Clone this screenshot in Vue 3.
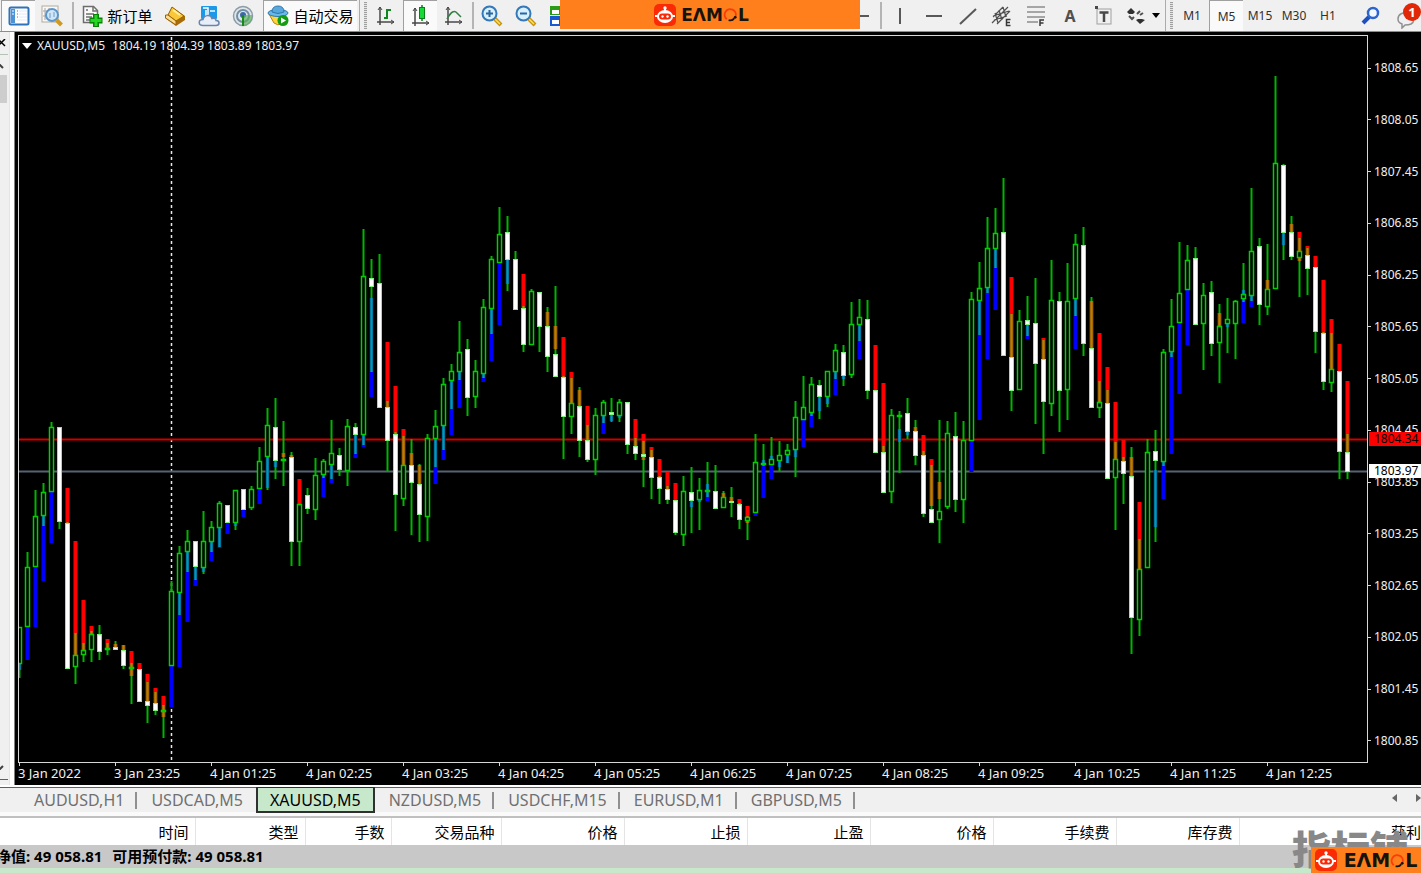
<script setup>
// One bar per entry: kind (g rising, w falling), high, body top, body bottom, low,
// then optionally the trend ribbon: colour (b, r), top, bottom. Plot units.
const source = `
g 627 627 664 678 b 664 670;g 552 567 627 627 b 627 660;g 490 516 567 567 b 567 627;g 483 492 516 526 b 516 581;
g 422 427 492 492 b 492 543;w 427 427 522 529;w 522 523 669 669 r 488 523;g 633 655 667 684 r 541 655;
g 643 650 655 662 r 600 650;g 631 634 650 662 r 626 634;w 625 634 652 660;g 643 648 649 655 r 639 649;
w 641 647 650 650 r 644 647;w 645 650 666 669 r 645 650;g 663 667 668 704 r 651 676;w 669 669 702 702 r 663 669;
w 682 701 706 723 r 674 701;w 692 703 711 715 r 688 703;g 705 710 711 738 r 696 717;g 581 591 666 666 b 666 707;
g 546 553 593 615 b 593 667;g 530 541 552 572 b 552 622;w 541 541 567 580 b 567 586;g 511 541 568 574 b 568 572;
g 521 527 542 552 b 542 561;g 501 503 528 547 b 528 548;w 505 505 523 523 b 523 534;g 490 490 523 530 b 523 526;
w 489 489 510 510 b 510 517;g 486 489 508 510;g 447 461 489 489 b 489 504;g 408 425 457 490 b 457 488;
w 398 427 461 479 b 461 467;g 421 459 460 486 r 453 457;w 452 457 542 566 r 455 457;g 504 504 542 566 r 479 504;
w 488 495 509 514;g 458 475 510 520;g 459 461 475 478 b 475 497;g 420 453 465 479 b 465 483;
w 448 455 470 476;g 419 426 471 486;w 423 427 435 454 b 435 458;g 229 276 435 445 b 435 447;
w 259 278 287 372 b 298 397;w 254 283 408 408;w 401 407 441 471 r 342 407;w 432 434 495 531 r 386 434;
g 436 465 499 506 r 429 465;w 439 465 483 535 r 453 465;w 464 484 515 542 r 465 484;g 434 438 517 541;
g 410 426 439 467 b 439 484;g 378 384 426 450 b 426 460;g 364 371 381 409 b 381 435;g 321 352 372 380 b 372 408;
w 339 349 398 416;g 360 371 397 408;g 299 307 374 378 b 374 382;g 256 259 309 334 b 309 361;
g 207 234 263 263 b 263 325;w 216 232 260 291 b 260 284;w 251 259 310 310;w 306 308 345 352 r 274 308;
g 289 291 345 345;w 292 292 327 352;w 307 326 357 372 r 312 326;w 286 354 377 377 r 326 349;
w 376 377 417 459 r 337 377;g 378 403 417 434 r 372 403;w 387 406 441 457 r 390 406;w 425 440 460 462 r 406 440;
g 408 415 460 475;g 400 402 416 423 b 416 434;w 398 412 415 422 b 415 421;g 399 402 416 422 b 416 418;
w 402 402 445 454;w 438 446 454 460 r 419 446;w 441 454 457 487 r 434 460;w 450 457 478 499 r 447 457;
w 476 477 489 504 r 459 477;w 486 489 500 504 r 472 489;w 500 500 533 535 r 483 500;g 476 491 535 546;
w 467 492 501 533 b 501 507;g 478 490 500 530 b 500 502;g 462 490 491 497 b 484 501;w 465 491 509 509;
g 491 497 508 508 r 493 497;w 487 501 503 517 r 497 501;w 503 504 520 529 r 499 504;g 516 517 521 540 r 506 523;
g 434 462 513 513 b 513 516;g 444 463 465 466 b 460 498;g 437 459 465 465 b 456 479;g 441 455 461 471 b 461 467;
g 444 450 455 463 b 455 463;g 401 417 450 477 b 450 457;g 376 407 420 420 b 420 447;g 377 384 413 416 b 413 427;
w 380 385 397 419 b 397 411;g 371 371 397 407 b 397 404;g 344 350 372 379 b 372 395;w 345 352 376 386 b 376 379;
g 302 324 375 378;g 299 317 325 341 b 325 359;w 300 319 391 399;w 390 390 453 453 r 345 390;
w 446 452 493 493 r 383 452;g 409 415 492 503;g 411 415 416 473 b 429 442;w 398 413 432 439 b 432 435;
w 420 431 456 465 r 427 431;w 451 455 514 517 r 435 455;w 465 509 523 523 r 459 506;g 420 511 520 543 r 482 499;
g 421 433 507 509;w 412 436 500 512;g 421 440 500 523;g 292 299 441 441 b 441 472;
g 262 288 301 335 b 301 420;g 217 248 288 293 b 288 359;g 208 233 249 268 b 249 310;w 178 232 356 356;
w 314 357 391 411 r 277 357;g 310 321 390 390;w 296 320 325 336 b 325 339;w 278 323 364 424;
w 340 359 402 454 r 338 359;g 260 300 404 416;w 292 301 391 432;g 263 301 390 420;
g 234 244 299 316 b 299 349;w 227 245 344 356;w 297 348 408 408 r 301 348;g 381 402 408 418 r 333 402;
w 390 403 479 479 r 367 403;g 442 459 478 530 r 402 459;w 457 461 474 504 r 440 461;w 447 476 618 654 r 457 476;
g 539 569 620 636 r 502 569;g 439 452 568 568;w 430 451 461 542 b 470 527;g 349 352 462 466 b 462 499;
g 299 326 352 357 b 352 454;g 242 293 323 323 b 323 394;g 245 260 290 290 b 290 345;w 247 258 325 325;
g 283 295 324 370;w 281 292 344 356;g 304 326 343 383 r 313 326;g 298 319 324 353 b 324 327;
g 300 301 324 359;g 263 294 299 302 b 290 323;g 188 251 296 301 b 296 307;w 238 246 305 325;
g 244 289 307 315 r 280 289;g 76 163 289 289;w 164 165 233 260 b 233 245;w 216 232 257 260 r 224 232;
g 238 251 258 297 r 232 261;w 248 255 269 295 r 246 255;w 267 267 332 353 r 256 267;w 332 333 382 390 r 280 333;
g 333 369 383 392 r 319 369;w 371 371 452 479 r 344 371;w 434 452 472 479 r 381 452`

const candles = source.trim().split(';').map((entry, i) => {
  const [kind, high, top, bottom, low, tone, from, to] = entry.trim().split(' ')
    .map((v) => (/^\d/.test(v) ? Number(v) : v))
  const start = Math.max(high, from)
  const end = Math.min(low, to)
  return { kind, high, top, bottom, low, tone, from, to, start, end, x: 19.5 + i * 8, overlap: tone && end > start }
})

const prices = ['1808.65', '1808.05', '1807.45', '1806.85', '1806.25', '1805.65', '1805.05', '1804.45', '1803.85', '1803.25', '1802.65', '1802.05', '1801.45', '1800.85']
const times = ['3 Jan 2022', '3 Jan 23:25', '4 Jan 01:25', '4 Jan 02:25', '4 Jan 03:25', '4 Jan 04:25', '4 Jan 05:25', '4 Jan 06:25', '4 Jan 07:25', '4 Jan 08:25', '4 Jan 09:25', '4 Jan 10:25', '4 Jan 11:25', '4 Jan 12:25']
const tabs = ['AUDUSD,H1', 'USDCAD,M5', 'XAUUSD,M5', 'NZDUSD,M5', 'USDCHF,M15', 'EURUSD,M1', 'GBPUSD,M5']
const columns = ['时间', '类型', '手数', '交易品种', '价格', '止损', '止盈', '价格', '手续费', '库存费', '获利']
const frames = ['M1', 'M5', 'M15', 'M30', 'H1']
</script>

<template>
  <div class="app">
    <header class="toolbar">
      <button class="tool pressed" aria-label="Market watch">
        <svg width="22" height="20" viewBox="0 0 22 20"><rect x="1.5" y="1.5" width="19" height="17" rx="1.5" fill="#fff" stroke="#2f74b8" stroke-width="2"/><rect x="3" y="3" width="4" height="14" fill="#4e94d4"/><path d="M4 5h2M4 8h2" stroke="#fff"/><path d="M9 5h1M9 8h1M9 11h1" stroke="#e04040"/><path d="M11 5h8M11 8h8M11 11h8M9 14h10" stroke="#e4ecf8"/></svg>
      </button>
      <button class="tool" aria-label="Data window">
        <svg width="24" height="22" viewBox="0 0 24 22"><rect x="2" y="1" width="16" height="16" fill="#f8f8f8" stroke="#b4aa9a"/><path d="M5 3v12M9 3v12M3 6h14M3 11h14" stroke="#a8a8a8"/><circle cx="12" cy="10" r="6" fill="#cfe6f8" stroke="#5c96c8" stroke-width="2"/><path d="M10 13V8M14 12V7" stroke="#6c9cc4"/><path d="M16.500 15l5 5" stroke="#d09a20" stroke-width="4"/></svg>
      </button>
      <i class="divider"></i>
      <button class="tool wide">
        <svg width="22" height="24" viewBox="0 0 22 24"><path d="M1.500 2.500h10l4 4v12h-14z" fill="#fafafa" stroke="#6c6c6c" stroke-width="1.500"/><path d="M11 2v5h5M4 6h2M4 10h8M4 13h6M4 16h4" stroke="#707070" fill="none" stroke-width="1.500"/><path d="M14 10v13M7.500 16.500h13" stroke="#078207" stroke-width="6"/><path d="M14 11v11M8.500 16.500h11" stroke="#22d822" stroke-width="3"/></svg>
        <span>新订单</span>
      </button>
      <button class="tool" aria-label="Metaeditor">
        <svg width="22" height="20" viewBox="0 0 22 20"><path d="M8 1l13 9v4l-9 6L1 12V9h3z" fill="#a86c04"/><path d="M8 1l12 9-8 5-8-6z" fill="#f8c838" stroke="#9c6000"/><path d="M1.500 9H4l8 6v4L1.500 12z" fill="#f8dc90" stroke="#9c6000"/><path d="M9 4l7 5" stroke="#fff0a0" stroke-width="2"/></svg>
      </button>
      <button class="tool" aria-label="Cloud service">
        <svg width="22" height="22" viewBox="0 0 22 22"><rect x="3" y="1" width="16" height="13" rx="1" fill="#1c98e8"/><path d="M5 3h5v9M8 5v7" stroke="#fff" stroke-width="1.500" fill="none"/><path d="M12 6h5" stroke="#b8e4ff" stroke-width="2"/><path d="M5 20.500c-5 0-5-6 0-6 1-5 8-5 9-1 3-1 4 1 4 2 4 0 4 5 0 5z" fill="#e8eef8" stroke="#6c84ac" stroke-width="1.500"/></svg>
      </button>
      <button class="tool" aria-label="Signals">
        <svg width="22" height="22" viewBox="0 0 22 22"><circle cx="11" cy="11" r="9.500" fill="#e0e6ea" stroke="#8c9ca8" stroke-width="1.500"/><circle cx="11" cy="11" r="6" fill="none" stroke="#7090a4" stroke-width="2"/><circle cx="11" cy="10" r="3" fill="#3c68a8"/><path d="M11 10v11c6-1 10-5 9-11" fill="#58b058" opacity=".65"/><path d="M11 10v11" stroke="#188818" stroke-width="2"/></svg>
      </button>
      <button class="tool auto pressed">
        <svg width="22" height="22" viewBox="0 0 22 22"><path d="M2 9l5 9q4 3 7 1l5-9z" fill="#ffd43c" stroke="#b88408"/><ellipse cx="11" cy="8" rx="10" ry="3.500" fill="#68b8e8" stroke="#2c78b0"/><path d="M5 7q0-6 6-6t6 6q-6 3-12 0z" fill="#58a8dc" stroke="#2c78b0"/><circle cx="16" cy="15.500" r="5.500" fill="#129c12"/><path d="M14 12.500l5 3-5 3z" fill="#fff"/></svg>
        <span>自动交易</span>
      </button>
      <i class="edge"></i><i class="grip"></i>
      <button class="tool" aria-label="Bar chart">
        <svg width="20" height="20" viewBox="0 0 20 20"><path d="M4 1v18M1 16h17" stroke="#484848" stroke-width="1.500"/><path d="M2 4l2-3 2 3M15 14l3 2-3 2" stroke="#484848" fill="none"/><path d="M11 13V3M8 12h3M11 4h4" stroke="#108820" stroke-width="2"/></svg>
      </button>
      <button class="tool pressed" aria-label="Candlesticks">
        <svg width="20" height="22" viewBox="0 0 20 22"><path d="M4 3v18M1 18h17" stroke="#484848" stroke-width="1.500"/><path d="M2 6l2-3 2 3M15 16l3 2-3 2" stroke="#484848" fill="none"/><path d="M11 0v16" stroke="#088018" stroke-width="1.500"/><rect x="8.500" y="2.500" width="5" height="11" fill="#18d838" stroke="#088018"/></svg>
      </button>
      <button class="tool" aria-label="Line chart">
        <svg width="20" height="20" viewBox="0 0 20 20"><path d="M4 1v18M1 16h17" stroke="#484848" stroke-width="1.500"/><path d="M2 4l2-3 2 3M15 14l3 2-3 2" stroke="#484848" fill="none"/><path d="M3 13Q9 2 13 7l4 4" stroke="#348044" stroke-width="1.500" fill="none"/></svg>
      </button>
      <i class="rule"></i>
      <button class="tool" aria-label="Zoom in">
        <svg width="22" height="22" viewBox="0 0 22 22"><path d="M14 14l6 6" stroke="#c89410" stroke-width="4"/><path d="M14 14l5 5" stroke="#ffe060" stroke-width="1.500"/><circle cx="8.500" cy="8.500" r="7" fill="#d8efff" stroke="#3478b8" stroke-width="2"/><path d="M5 8.500h7M8.500 5v7" stroke="#2868a0" stroke-width="2"/></svg>
      </button>
      <button class="tool" aria-label="Zoom out">
        <svg width="22" height="22" viewBox="0 0 22 22"><path d="M14 14l6 6" stroke="#c89410" stroke-width="4"/><path d="M14 14l5 5" stroke="#ffe060" stroke-width="1.500"/><circle cx="8.500" cy="8.500" r="7" fill="#d8efff" stroke="#3478b8" stroke-width="2"/><path d="M5 8.500h7" stroke="#2868a0" stroke-width="2"/></svg>
      </button>
      <button class="tool" aria-label="Tile windows">
        <svg width="22" height="22" viewBox="0 0 22 22"><rect x="1" y="1" width="20" height="9" fill="#2c9c18"/><rect x="3" y="5" width="7" height="4" fill="#fff"/><rect x="1" y="11" width="20" height="10" fill="#1858d0"/><rect x="3" y="15" width="7" height="4" fill="#fff"/></svg>
      </button>
      <span class="fill"></span>
      <button class="tool" aria-label="Crosshair">
        <svg width="20" height="20" viewBox="0 0 20 20"><path d="M0 10h17M5 1v18" stroke="#585858" stroke-width="2"/></svg>
      </button>
      <i class="rule"></i>
      <button class="tool" aria-label="Vertical line">
        <svg width="20" height="20" viewBox="0 0 20 20"><path d="M10 2v16" stroke="#585858" stroke-width="2"/></svg>
      </button>
      <button class="tool" aria-label="Horizontal line">
        <svg width="20" height="20" viewBox="0 0 20 20"><path d="M2 10h16" stroke="#585858" stroke-width="2"/></svg>
      </button>
      <button class="tool" aria-label="Trend line">
        <svg width="20" height="20" viewBox="0 0 20 20"><path d="M2 18L18 3" stroke="#585858" stroke-width="2"/></svg>
      </button>
      <button class="tool" aria-label="Equidistant channel">
        <svg width="22" height="22" viewBox="0 0 22 22"><path d="M2 12L12 2M1 18L17 2M6 19L19 6M4 8l3 10M8 5l3 10M12 2l3 10M2 11l16-5M3 15l13-4" stroke="#505050" stroke-width="1.200"/><path d="M19.500 14.500h-4v6h4M15.500 17.500h3.500" stroke="#383838" stroke-width="1.500" fill="none"/></svg>
      </button>
      <button class="tool" aria-label="Fibonacci retracement">
        <svg width="20" height="22" viewBox="0 0 20 22"><path d="M1 2h18M1 7h18M1 12h18M1 17h11" stroke="#8c8c8c" stroke-width="1.500"/><path d="M18 15h-4v6M14 18h3.500" stroke="#383838" stroke-width="1.500" fill="none"/></svg>
      </button>
      <button class="tool letter" aria-label="Text">A</button>
      <button class="tool" aria-label="Text label">
        <svg width="20" height="20" viewBox="0 0 20 20"><rect x="3" y="3" width="14" height="15" fill="none" stroke="#a0a0a0"/><path d="M5.500 6.500h9M10 6v10" stroke="#484848" stroke-width="2.500"/><path d="M1 0h3v3H1z" fill="#484848"/></svg>
      </button>
      <button class="tool objects" aria-label="Arrows">
        <svg width="20" height="18" viewBox="0 0 20 18"><path d="M5 1l4 4-2 2H3L1 5zM14 17l-4-4 2-1h4l3 1z" fill="#303030"/><path d="M3 9l3 3 2-2M11 7l3-3M14 8l3-2" stroke="#505050" stroke-width="2" fill="none"/></svg>
        <svg width="8" height="5" viewBox="0 0 8 5"><path d="M0 0h8L4 5z" fill="#000"/></svg>
      </button>
      <i class="edge"></i><i class="grip"></i>
      <button v-for="f in frames" :key="f" class="tool frame" :class="{ pressed: f === 'M5' }">{{ f }}</button>
      <button class="tool find" aria-label="Search">
        <svg width="20" height="20" viewBox="0 0 20 20"><path d="M8 11l-6 6" stroke="#1c50c0" stroke-width="4"/><circle cx="12" cy="7" r="5" fill="#f4f8ff" stroke="#2c64d0" stroke-width="2.500"/></svg>
      </button>
      <button class="tool chat" aria-label="Notifications">
        <svg width="24" height="26" viewBox="0 0 24 26"><path d="M2 16c0-5 5-7 10-6s8 8 3 11c-2 1-5 1-6 1l-3 3v-4c-3-1-4-3-4-5z" fill="#eef0f4" stroke="#909090" stroke-width="1.500"/></svg>
        <b>1</b>
      </button>
      <div class="banner">
        <svg class="robot" viewBox="0 0 22 22"><rect width="22" height="22" rx="5" fill="#fb2a06"/><circle cx="11" cy="4" r="1.700" fill="#fff"/><path d="M11 4v4M1 12h3M18 12h3" stroke="#fff" stroke-width="2"/><ellipse cx="11" cy="12.500" rx="8" ry="6.500" fill="#fff"/><rect x="5" y="9.500" width="12" height="6" rx="3" fill="#fb2a06"/><circle cx="8.500" cy="12.500" r="1.200" fill="#fff"/><circle cx="13.500" cy="12.500" r="1.200" fill="#fff"/></svg>
        <span>EΛM</span>
        <svg class="ring" viewBox="0 0 16 16"><path d="M4 13A6 6 0 1 1 13.500 10" fill="none" stroke="#fb3c08" stroke-width="2"/><path d="M6 14Q10 15 12 12" fill="none" stroke="#16120c" stroke-width="2"/><circle cx="13" cy="11" r="1.500" fill="#16120c"/></svg>
        <span>L</span>
      </div>
    </header>

    <main class="work">
      <aside class="side">
        <button class="close" aria-label="Close panel"><svg width="6" height="8" viewBox="0 0 6 8"><path d="M-2 0l7 7M5 0l-7 7" stroke="#000" stroke-width="1.500"/></svg></button>
        <div class="track">
          <svg width="4" height="5" viewBox="0 0 4 5"><path d="M-3 4l3-3 3 3" stroke="#404040" stroke-width="2" fill="none"/></svg>
          <i class="thumb"></i>
          <svg class="down" width="4" height="5" viewBox="0 0 4 5"><path d="M-3 1l3 3 3-3" stroke="#404040" stroke-width="2" fill="none"/></svg>
        </div>
      </aside>

      <section class="chart">
        <div class="plot">
          <svg class="canvas" viewBox="19 36 1348 726" preserveAspectRatio="none">
            <path d="M171.500 37V762" stroke="#e8e8e8" stroke-width="1.500" stroke-dasharray="3 3"/>
            <path d="M19 439.500H1367" stroke="#d00000" stroke-width="2"/>
            <path d="M19 471.500H1367" stroke="#566472" stroke-width="2"/>
            <g v-for="c in candles" :key="c.x">
              <rect v-if="c.tone" :class="c.tone" :x="c.x - 2" :y="c.from" width="4" :height="c.to - c.from"/>
              <line class="wick" :x1="c.x" :x2="c.x" :y1="c.high" :y2="c.low"/>
              <line v-if="c.overlap" :class="'mix-' + c.tone" :x1="c.x" :x2="c.x" :y1="c.start" :y2="c.end"/>
              <rect :class="c.kind" :x="c.x - 2" :y="c.top + 0.5" width="4" :height="Math.max(1, c.bottom - c.top - 1)"/>
            </g>
          </svg>
          <div class="caption">
            <svg width="10" height="6" viewBox="0 0 10 6"><path d="M0 0h10L5 6z" fill="#fff"/></svg>
            <span>XAUUSD,M5</span><span>1804.19 1804.39 1803.89 1803.97</span>
          </div>
        </div>
        <div class="prices">
          <span v-for="p in prices" :key="p">{{ p }}</span>
          <b class="tag ask">1804.34</b>
          <b class="tag bid">1803.97</b>
        </div>
        <div class="times"><span v-for="t in times" :key="t">{{ t }}</span></div>
      </section>
    </main>

    <nav class="tabs">
      <button v-for="t in tabs" :key="t" :class="{ active: t === 'XAUUSD,M5' }">{{ t }}</button>
      <span class="fill"></span>
      <button class="arrow" aria-label="Previous"><svg width="5" height="8" viewBox="0 0 5 8"><path d="M5 0v8L0 4z" fill="#666"/></svg></button>
      <button class="arrow" aria-label="Next"><svg width="5" height="8" viewBox="0 0 5 8"><path d="M0 0v8l5-4z" fill="#666"/></svg></button>
    </nav>

    <footer class="terminal">
      <span class="mark">指标铺</span>
      <table>
        <thead><tr><th v-for="(c, i) in columns" :key="i" :class="'c' + i">{{ c }}</th></tr></thead>
      </table>
      <div class="status"><span>净值: 49 058.81</span><span>可用预付款: 49 058.81</span></div>
      <div class="banner corner">
        <svg class="robot" viewBox="0 0 22 22"><rect width="22" height="22" rx="5" fill="#fb2a06"/><circle cx="11" cy="4" r="1.700" fill="#fff"/><path d="M11 4v4M1 12h3M18 12h3" stroke="#fff" stroke-width="2"/><ellipse cx="11" cy="12.500" rx="8" ry="6.500" fill="#fff"/><rect x="5" y="9.500" width="12" height="6" rx="3" fill="#fb2a06"/><circle cx="8.500" cy="12.500" r="1.200" fill="#fff"/><circle cx="13.500" cy="12.500" r="1.200" fill="#fff"/></svg>
        <span>EΛM</span>
        <svg class="ring" viewBox="0 0 16 16"><path d="M4 13A6 6 0 1 1 13.500 10" fill="none" stroke="#fb3c08" stroke-width="2"/><path d="M6 14Q10 15 12 12" fill="none" stroke="#16120c" stroke-width="2"/><circle cx="13" cy="11" r="1.500" fill="#16120c"/></svg>
        <span>L</span>
      </div>
    </footer>
  </div>
</template>

<style>
body { background: #f0f0f0; }
</style>

<style scoped>
.app {
  min-height: 100vh;
  display: flex;
  flex-direction: column;
  overflow: hidden;
  background: #f0f0f0;
  color: #000;
  font-family: "Noto Sans", "Noto Sans CJK SC", sans-serif;
  font-size: 15px;
}
.app * { box-sizing: border-box; }
button { border: 0; padding: 0; margin: 0; background: none; font: inherit; color: inherit; }
svg { display: block; flex: none; }
.fill { flex: 1; }

.toolbar {
  position: relative;
  display: flex;
  align-items: stretch;
  height: 32px;
  padding-left: 1px;
  border-bottom: 1px solid #8c8c8c;
}
.tool { flex: none; width: 34px; display: flex; align-items: center; justify-content: center; }
.tool span { line-height: 20px; white-space: nowrap; }
.pressed { background: #fafafa; border-top: 1px solid #a0a0a0; border-left: 1px solid #a0a0a0; }
.wide { width: 81px; gap: 3px; }
.auto { width: 94px; gap: 4px; margin: 0 2px 0 3px; }
.divider { flex: none; width: 2px; margin: 2px 3px; background: #b4b4b4; }
.rule { flex: none; width: 2px; margin: 2px 1px; background: #b4b4b4; }
.edge { flex: none; width: 1px; margin-right: 4px; background: #9cb4a0; }
.grip { flex: none; width: 3px; margin: 2px 2px 2px 0; background: repeating-linear-gradient(#a0a0a0 0 1px, #e4e4e4 1px 2px); }
.letter { font-size: 16px; font-weight: 700; color: #505050; }
.objects { width: 44px; gap: 6px; }
.frame { font-size: 12px; color: #303030; }
.find { margin: 0 6px 0 9px; }
.chat { position: relative; width: 27px; overflow: hidden; }
.chat b {
  position: absolute;
  top: 3px;
  right: 0;
  width: 18px;
  height: 18px;
  border-radius: 9px;
  background: #e02808;
  color: #fff;
  font-size: 13px;
  line-height: 18px;
}
.banner {
  position: absolute;
  top: 0;
  left: 560px;
  width: 300px;
  height: 29px;
  display: flex;
  align-items: center;
  justify-content: center;
  padding-right: 17px;
  background: #ff7f1c;
  color: #16120c;
  font: 700 17px/20px "DejaVu Sans", sans-serif;
}
.robot { width: 22px; height: 22px; margin-right: 5px; }
.ring { width: 15px; height: 15px; }

.work { flex: 1; display: flex; }
.side { flex: none; width: 15px; display: flex; flex-direction: column; border-right: 1px solid #808080; background: linear-gradient(90deg, #f0f0f0 9px, #dcecdc 9px 10px, #fff 10px); }
.close { height: 22px; display: flex; align-items: center; }
.track { flex: 1; width: 8px; margin-bottom: 5px; padding: 9px 0; display: flex; flex-direction: column; border-top: 1px solid #b4c4b4; border-bottom: 1px solid #606060; }
.thumb { width: 7px; height: 28px; margin-top: 6px; background: #cdcdcd; }
.down { margin-top: auto; }

.chart {
  flex: 1;
  min-width: 0;
  display: grid;
  grid-template: minmax(0, 1fr) 22px / minmax(0, 1fr) 53px;
  padding: 3px 0 0 3px;
  background: #000;
  color: #f0f0f0;
  font-size: 12px;
}
.plot { position: relative; border: 1px solid #d8d8d8; }
.canvas { position: absolute; width: 100%; height: 100%; }
.caption { position: relative; display: flex; align-items: center; gap: 7px; padding-left: 3px; line-height: 19px; white-space: pre; }
.caption svg { margin-right: -2px; }
.wick { stroke: #00b400; stroke-width: 2; }
.g { fill: #000; stroke: #00d000; stroke-width: 1.5; }
.w { fill: #fff; stroke: #78f878; }
.b { fill: #00f; }
.r { fill: #f00; }
.mix-b { stroke: #0098c0; stroke-width: 2; }
.mix-r { stroke: #c87800; stroke-width: 2; }

.prices { position: relative; display: flex; flex-direction: column; justify-content: space-between; padding: 25px 0 14px; line-height: 16px; }
.prices span { display: flex; align-items: center; gap: 3px; }
.prices span::before { content: ""; width: 3px; height: 1px; background: #d8d8d8; }
.tag { position: absolute; left: 1px; right: 0; padding-left: 5px; font-weight: 400; line-height: 14px; color: #000; }
.ask { top: 397px; background: #f00; }
.bid { top: 429px; background: #fff; }
.times { grid-column: 1 / -1; display: flex; overflow: hidden; font-size: 13px; line-height: 21px; }
.times span { flex: none; width: 96px; white-space: nowrap; }
.times span::before { content: ""; display: block; width: 1px; height: 3px; margin: 0 0 -3px 1px; background: #d8d8d8; }

.tabs { display: flex; height: 33px; padding-left: 20px; border-top: 2px solid #fff; border-bottom: 2px solid #c0c0c0; box-shadow: inset 0 1px #606060; background: linear-gradient(#f0f0f0 25px, #fafafa 25px); }
.tabs button { position: relative; height: 26px; padding: 0 13px 0 14px; font-size: 16px; line-height: 26px; color: #707070; white-space: nowrap; }
.tabs button:not(.active, .arrow)::after { content: ""; position: absolute; right: 0; top: 5px; width: 2px; height: 17px; background: #909090; }
.tabs button:has(+ .active)::after { display: none; }
.tabs .active { background: #c8e8cc; border: 2px solid #303030; border-top-width: 1px; line-height: 22px; padding: 0 12px; color: #000; }
.tabs .arrow { padding: 0; margin-left: 19px; display: flex; align-items: center; height: 22px; }

.terminal { position: relative; background: #fff; }
table { position: relative; width: 100%; height: 27px; table-layout: fixed; border-collapse: collapse; }
th { padding: 0 6px 0 0; border-right: 1px solid #e4e4e4; font-weight: 400; line-height: 24px; text-align: right; }
.c0 { width: 195px; }
.c1, .c3 { width: 110px; }
.c2 { width: 86px; }
.c4, .c5, .c6, .c7, .c8, .c9 { width: 123px; }
.c10 { padding: 0; border: 0; }
.status { height: 28px; display: flex; gap: 10px; padding-right: 8px; overflow: hidden; border-bottom: 5px solid #c8e8cc; background: #c8c8c8; font-weight: 700; line-height: 22px; white-space: nowrap; }
.status span:first-child { margin-left: -4px; }
.mark { position: absolute; right: 12px; top: 12px; z-index: 1; font-size: 39px; font-weight: 900; line-height: 38px; color: #888; }
.corner { top: auto; left: auto; right: 0; bottom: 0; z-index: 2; width: 110px; height: 26px; padding: 0; font-size: 19px; }
.corner .robot { margin-right: 7px; }
</style>
